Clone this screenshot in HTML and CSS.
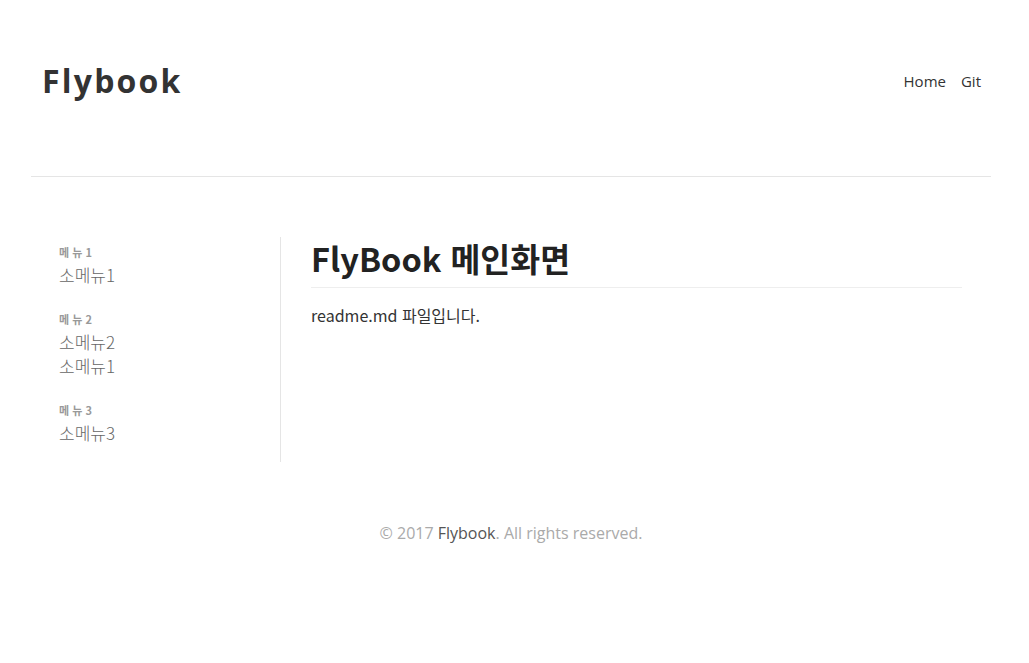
FILE: index.html
```html
<!DOCTYPE html>
<html lang="ko">
<head>
<meta charset="utf-8">
<title>Flybook</title>
<link rel="stylesheet" href="styles.css">
</head>
<body>
<div class="page">
  <header class="header">
    <a class="logo" href="#">Flybook</a>
    <nav class="nav">
      <a href="#">Home</a>
      <a href="#">Git</a>
    </nav>
  </header>
  <main class="main">
    <aside class="sidebar">
      <div class="group">
        <div class="group-title">메 뉴 1</div>
        <a class="item" href="#">소메뉴1</a>
      </div>
      <div class="group">
        <div class="group-title">메 뉴 2</div>
        <a class="item" href="#">소메뉴2</a>
        <a class="item" href="#">소메뉴1</a>
      </div>
      <div class="group">
        <div class="group-title">메 뉴 3</div>
        <a class="item" href="#">소메뉴3</a>
      </div>
    </aside>
    <article class="content">
      <h1 class="title">FlyBook 메인화면</h1>
      <p class="text">readme.md 파일입니다.</p>
    </article>
  </main>
  <footer class="footer">© 2017 <a href="#">Flybook</a>. All rights reserved.</footer>
</div>
</body>
</html>
```
FILE: styles.css
```css
html, body {
  margin: 0;
  padding: 0;
  background: #fff;
}
body {
  font-family: "Open Sans", "Noto Sans CJK KR", sans-serif;
  color: #333;
}
a { text-decoration: none; color: inherit; }
.page {
  width: 960px;
  margin-left: 31px;
}
.header {
  height: 177px;
  border-bottom: 1px solid #e5e5e5;
  display: flex;
  align-items: center;
  justify-content: space-between;
  padding: 0 10px 14px 11px;
  box-sizing: border-box;
}
.logo {
  font-size: 32px;
  font-weight: 700;
  letter-spacing: 2.2px;
  color: #333;
  line-height: 1;
}
.nav {
  display: flex;
  gap: 15px;
}
.nav a {
  font-size: 15px;
  color: #333;
}
.main {
  display: flex;
  margin-top: 60px;
}
.sidebar {
  width: 221px;
  padding-left: 28px;
  border-right: 1px solid #e5e5e5;
  padding-top: 6px;
  padding-bottom: 17px;
  display: flex;
  flex-direction: column;
  gap: 23px;
}
.group {
  display: flex;
  flex-direction: column;
}
.group-title {
  font-size: 11px;
  font-weight: 700;
  color: #999;
  line-height: 18px;
  margin-bottom: 2px;
  font-family: "Noto Sans CJK KR", sans-serif;
}
.item {
  font-size: 17px;
  font-weight: 300;
  color: #666;
  line-height: 24px;
  font-family: "Noto Sans CJK KR", sans-serif;
}
.content {
  flex: 1;
  padding: 0 29px 0 30px;
}
.title {
  margin: -1px 0 0;
  font-family: "Noto Sans CJK KR", sans-serif;
  font-size: 32.5px;
  font-weight: 700;
  color: #222;
  line-height: 44px;
  padding-bottom: 7px;
  border-bottom: 1px solid #eee;
}
.text {
  margin: 15px 0 0;
  font-size: 16px;
  line-height: 24px;
  color: #333;
  font-family: "Noto Sans CJK KR", sans-serif;
}
.footer {
  text-align: center;
  margin-top: 60px;
  font-size: 16px;
  line-height: 22px;
  color: #aaa;
  font-family: "Open Sans", "Noto Sans CJK KR", sans-serif;
}
.footer a { color: #555; }
```
